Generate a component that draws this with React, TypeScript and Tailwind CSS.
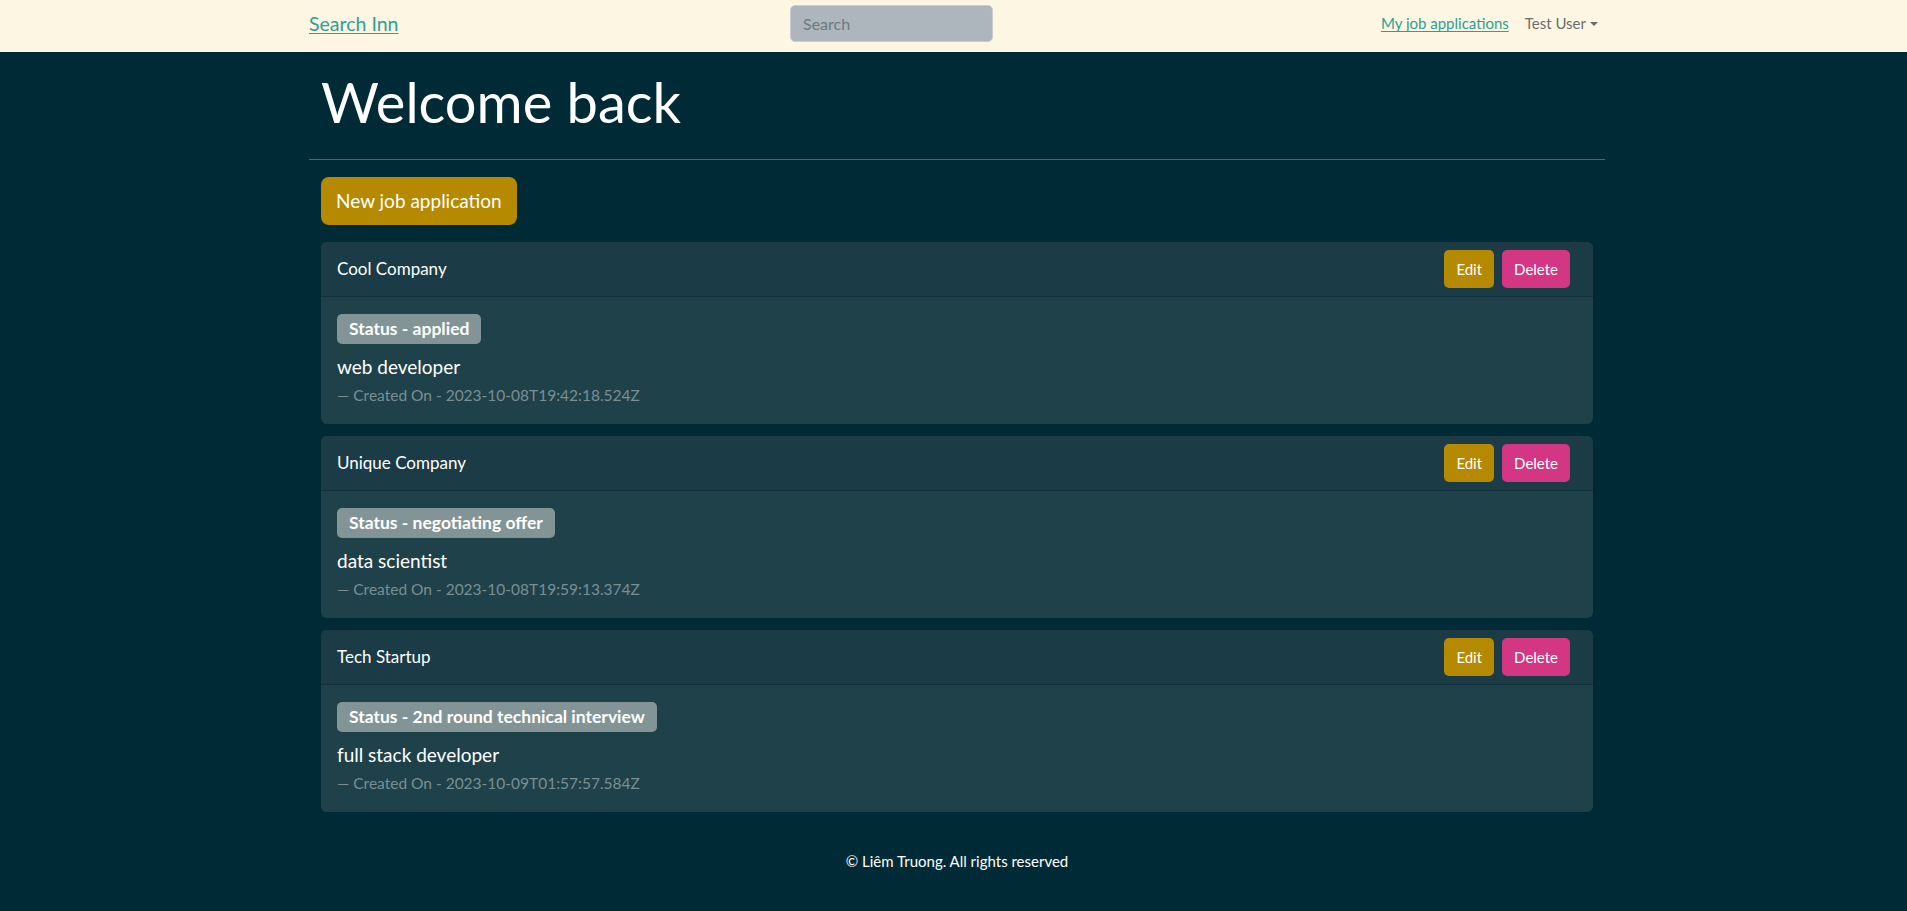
import React from 'react';

type Application = {
  company: string;
  status: string;
  position: string;
  createdOn: string;
};

const APPLICATIONS: Application[] = [
  {
    company: 'Cool Company',
    status: 'applied',
    position: 'web developer',
    createdOn: '2023-10-08T19:42:18.524Z',
  },
  {
    company: 'Unique Company',
    status: 'negotiating offer',
    position: 'data scientist',
    createdOn: '2023-10-08T19:59:13.374Z',
  },
  {
    company: 'Tech Startup',
    status: '2nd round technical interview',
    position: 'full stack developer',
    createdOn: '2023-10-09T01:57:57.584Z',
  },
];

const FONT = "font-['Source_Sans_Pro','Lato','Noto_Sans',sans-serif]";

function NavBar() {
  return (
    <nav className="h-[52px] bg-[#fdf6e3]">
      <div className="ml-[309px] flex h-full w-[1296px] items-center pb-[5px]">
        <div className="w-[481px]">
          <a href="#" className="text-[19.5px] text-[#2aa198] underline underline-offset-2">
            Search Inn
          </a>
        </div>
        <input
          placeholder="Search"
          className="h-[37px] w-[203px] rounded-[5px] border border-[#c9cdd1] bg-[#adb5bd] px-3 text-[16px] text-[#495057] placeholder:text-[#6c7a80] outline-none"
        />
        <div className="ml-auto flex items-center gap-[16px] pr-[7px] text-[15px]">
          <a href="#" className="text-[#2aa198] underline underline-offset-2">
            My job applications
          </a>
          <span className="flex items-center gap-[4px] text-[#6b6b6b]">
            Test User
            <span className="mt-[1px] h-0 w-0 border-x-[4px] border-t-[4px] border-x-transparent border-t-[#6b6b6b]" />
          </span>
        </div>
      </div>
    </nav>
  );
}

function ApplicationCard({ app }: { app: Application }) {
  return (
    <div className="overflow-hidden rounded-[6px] bg-[#1f414a]">
      <div className="flex h-[55px] items-center justify-between border-b border-[#0f323c] bg-[#1b3c46] pl-[16px] pr-[23px]">
        <span className="text-[17px] text-white">{app.company}</span>
        <div className="flex gap-[8px]">
          <button className="h-[38px] rounded-[5px] bg-[#b58900] px-[12px] text-[15px] text-white">
            Edit
          </button>
          <button className="h-[38px] rounded-[5px] bg-[#d33682] px-[12px] text-[15px] text-white">
            Delete
          </button>
        </div>
      </div>
      <div className="flex flex-col items-start px-[16px] pb-[17px] pt-[17px]">
        <span className="flex h-[30px] items-center rounded-[5px] bg-[#839496] px-[12px] text-[17.5px] font-bold text-white">
          Status - {app.status}
        </span>
        <div className="mt-[10px] text-[19px] leading-[26px] text-white">{app.position}</div>
        <div className="mt-[3px] text-[15.5px] leading-[24px] text-[#7a8f94]">
          — Created On - {app.createdOn}
        </div>
      </div>
    </div>
  );
}

export default function App() {
  return (
    <div className={`${FONT} min-h-[911px] bg-[#002b36]`}>
      <NavBar />
      <main className="ml-[309px] w-[1296px]">
        <h1 className="px-[12px] pt-[12px] text-[56px] font-normal leading-[76px] text-white">
          Welcome back
        </h1>
        <hr className="mt-[19px] border-t border-[#4d6770]" />
        <div className="px-[12px]">
          <button className="mt-[17px] h-[48px] rounded-[8px] bg-[#b58900] px-[15px] text-[19px] text-white">
            New job application
          </button>
          <div className="mt-[17px] flex flex-col gap-[12px]">
            {APPLICATIONS.map((app) => (
              <ApplicationCard key={app.company} app={app} />
            ))}
          </div>
        </div>
        <footer className="pb-[40px] pt-[38px] text-center text-[15px] text-white">
          © Liêm Truong. All rights reserved
        </footer>
      </main>
    </div>
  );
}
